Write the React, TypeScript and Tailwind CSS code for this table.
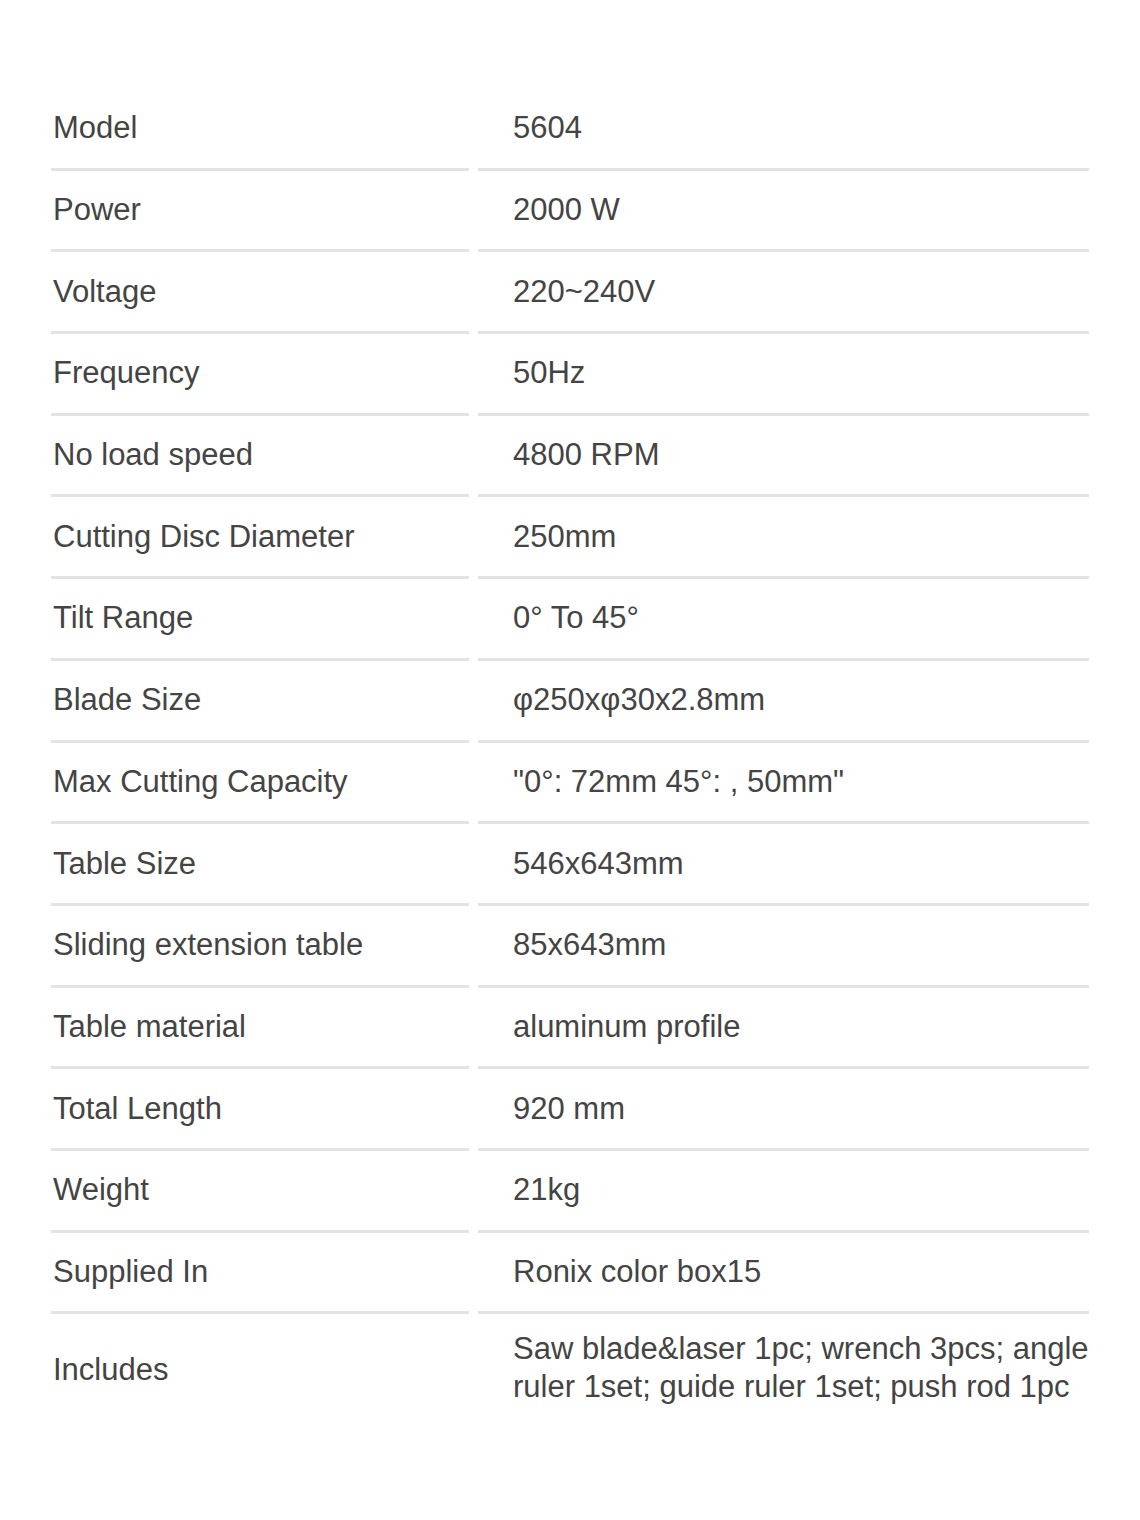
const SPECS: [string, string][] = [
  ["Model", "5604"],
  ["Power", "2000 W"],
  ["Voltage", "220~240V"],
  ["Frequency", "50Hz"],
  ["No load speed", "4800 RPM"],
  ["Cutting Disc Diameter", "250mm"],
  ["Tilt Range", "0° To 45°"],
  ["Blade Size", "φ250xφ30x2.8mm"],
  ["Max Cutting Capacity", "\"0°: 72mm 45°: , 50mm\""],
  ["Table Size", "546x643mm"],
  ["Sliding extension table", "85x643mm"],
  ["Table material", "aluminum profile"],
  ["Total Length", "920 mm"],
  ["Weight", "21kg"],
  ["Supplied In", "Ronix color box15"],
];

export default function App() {
  return (
    <div className="min-h-[1520px] w-[1140px] bg-white pt-[89px] pl-[51px] font-['Liberation_Sans',Arial,sans-serif] text-[31px] text-[#444]">
      <div className="grid w-[1038px] grid-cols-[418px_611px] gap-x-[9px]">
        {SPECS.map(([label, value]) => (
          <div key={label} className="contents">
            <div className="flex h-[81.7px] items-center border-b-[3px] border-[#e3e3e3] pl-[2px] leading-[38px]">
              {label}
            </div>
            <div className="flex h-[81.7px] items-center border-b-[3px] border-[#e3e3e3] pl-[35px] leading-[38px]">
              {value}
            </div>
          </div>
        ))}
        <div className="flex items-center pl-[2px] leading-[38px]">Includes</div>
        <div className="whitespace-nowrap pt-[16px] pb-[20px] pl-[35px] leading-[38px]">
          Saw blade&amp;laser 1pc; wrench 3pcs; angle
          <br />
          ruler 1set; guide ruler 1set; push rod 1pc
        </div>
      </div>
    </div>
  );
}
